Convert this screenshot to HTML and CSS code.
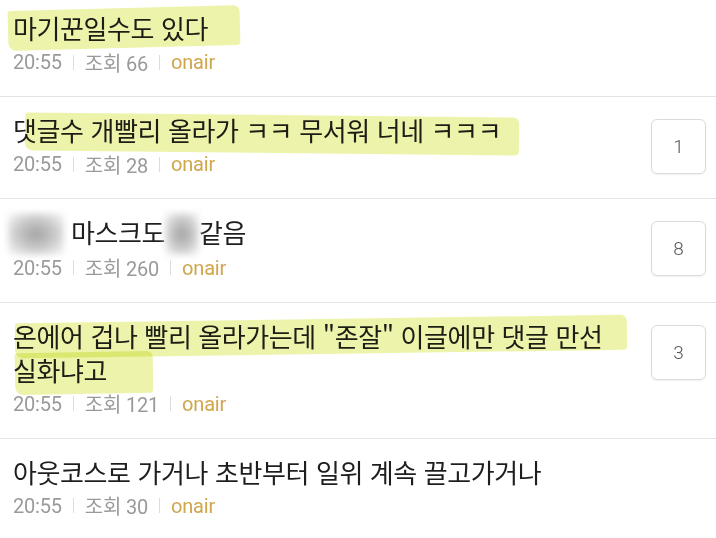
FILE: index.html
```html
<!DOCTYPE html>
<html lang="ko">
<head>
<meta charset="utf-8">
<link rel="stylesheet" href="styles.css">
</head>
<body>
<ul class="list">
  <li class="row">
    <div class="main">
      <span class="hl hl-1"></span>
      <div class="title">마기꾼일수도 있다</div>
      <div class="meta"><span>20:55</span><i class="bar"></i><span>조회 66</span><i class="bar"></i><span class="board">onair</span></div>
    </div>
  </li>
  <li class="row">
    <div class="main">
      <span class="hl hl-2"></span>
      <div class="title">댓글수 개빨리 올라가 ㅋㅋ 무서워 너네 ㅋㅋㅋ</div>
      <div class="meta"><span>20:55</span><i class="bar"></i><span>조회 28</span><i class="bar"></i><span class="board">onair</span></div>
    </div>
    <div class="count">1</div>
  </li>
  <li class="row">
    <div class="main">
      <div class="title"><span class="blur blur-a"></span> 마스크도<span class="blur blur-b"></span>같음</div>
      <div class="meta"><span>20:55</span><i class="bar"></i><span>조회 260</span><i class="bar"></i><span class="board">onair</span></div>
    </div>
    <div class="count">8</div>
  </li>
  <li class="row">
    <div class="main">
      <span class="hl hl-4a"></span>
      <span class="hl hl-4b"></span>
      <div class="title">온에어 겁나 빨리 올라가는데 "존잘" 이글에만 댓글 만선 실화냐고</div>
      <div class="meta"><span>20:55</span><i class="bar"></i><span>조회 121</span><i class="bar"></i><span class="board">onair</span></div>
    </div>
    <div class="count">3</div>
  </li>
  <li class="row">
    <div class="main">
      <div class="title">아웃코스로 가거나 초반부터 일위 계속 끌고가거나</div>
      <div class="meta"><span>20:55</span><i class="bar"></i><span>조회 30</span><i class="bar"></i><span class="board">onair</span></div>
    </div>
  </li>
</ul>
</body>
</html>
```

FILE: styles.css
```css
html, body {
  margin: 0;
  padding: 0;
  background: #fff;
  overflow: hidden;
}
body {
  font-family: "Noto Sans CJK KR", "Noto Sans", sans-serif;
  color: #1e1e1e;
}
.list {
  list-style: none;
  margin: -5px 0 0;
  padding: 0;
}
.row {
  display: flex;
  align-items: flex-start;
  padding: 16px 10px 19px 13px;
  border-bottom: 1px solid #e4e4e4;
}
.main {
  position: relative;
  flex: 1;
  min-width: 0;
  padding-right: 18px;
}
.title {
  position: relative;
  font-size: 26px;
  line-height: 34px;
  letter-spacing: -0.4px;
  word-break: keep-all;
}
.meta {
  display: flex;
  align-items: center;
  margin-top: 2px;
  height: 30px;
  font-family: Roboto, "Noto Sans CJK KR", sans-serif;
  font-size: 20px;
  color: #9a9a9a;
  letter-spacing: -0.2px;
}
.bar {
  display: inline-block;
  width: 1px;
  height: 15px;
  background: #dcdcdc;
  margin: 0 11px;
}
.board {
  color: #cfa64b;
}
.count {
  flex: none;
  width: 53px;
  height: 53px;
  margin-top: 6px;
  border: 1px solid #dadada;
  border-radius: 6px;
  display: flex;
  align-items: center;
  justify-content: center;
  font-family: Roboto, sans-serif;
  font-size: 19px;
  font-weight: 300;
  color: #555;
  box-shadow: 0 1px 2px rgba(0,0,0,0.06);
}
.hl {
  position: absolute;
  z-index: 1;
  background: rgba(222, 234, 100, 0.55);
  mix-blend-mode: multiply;
  border-radius: 3px 6px 4px 8px;
  pointer-events: none;
}
.hl-1 {
  left: -5px;
  top: -3px;
  width: 232px;
  height: 40px;
  transform: rotate(-1.5deg);
}
.hl-2 {
  left: 12px;
  top: 2px;
  width: 494px;
  height: 38px;
  transform: rotate(0.6deg);
}
.hl-4a {
  left: 2px;
  top: 0;
  width: 612px;
  height: 35px;
  transform: rotate(-0.8deg);
}
.hl-4b {
  left: 2px;
  top: 33px;
  width: 138px;
  height: 42px;
  transform: rotate(-1deg);
}
.blur {
  display: inline-block;
  vertical-align: middle;
  height: 42px;
  margin-top: -8px;
  margin-bottom: -4px;
  background: radial-gradient(ellipse at center, #a4a4a4 0%, #c2c2c2 40%, #eeeeee 85%, #fafafa 100%);
  filter: blur(3px);
}
.blur-a {
  width: 56px;
  margin-left: -5px;
}
.blur-b {
  width: 34px;
}
```
